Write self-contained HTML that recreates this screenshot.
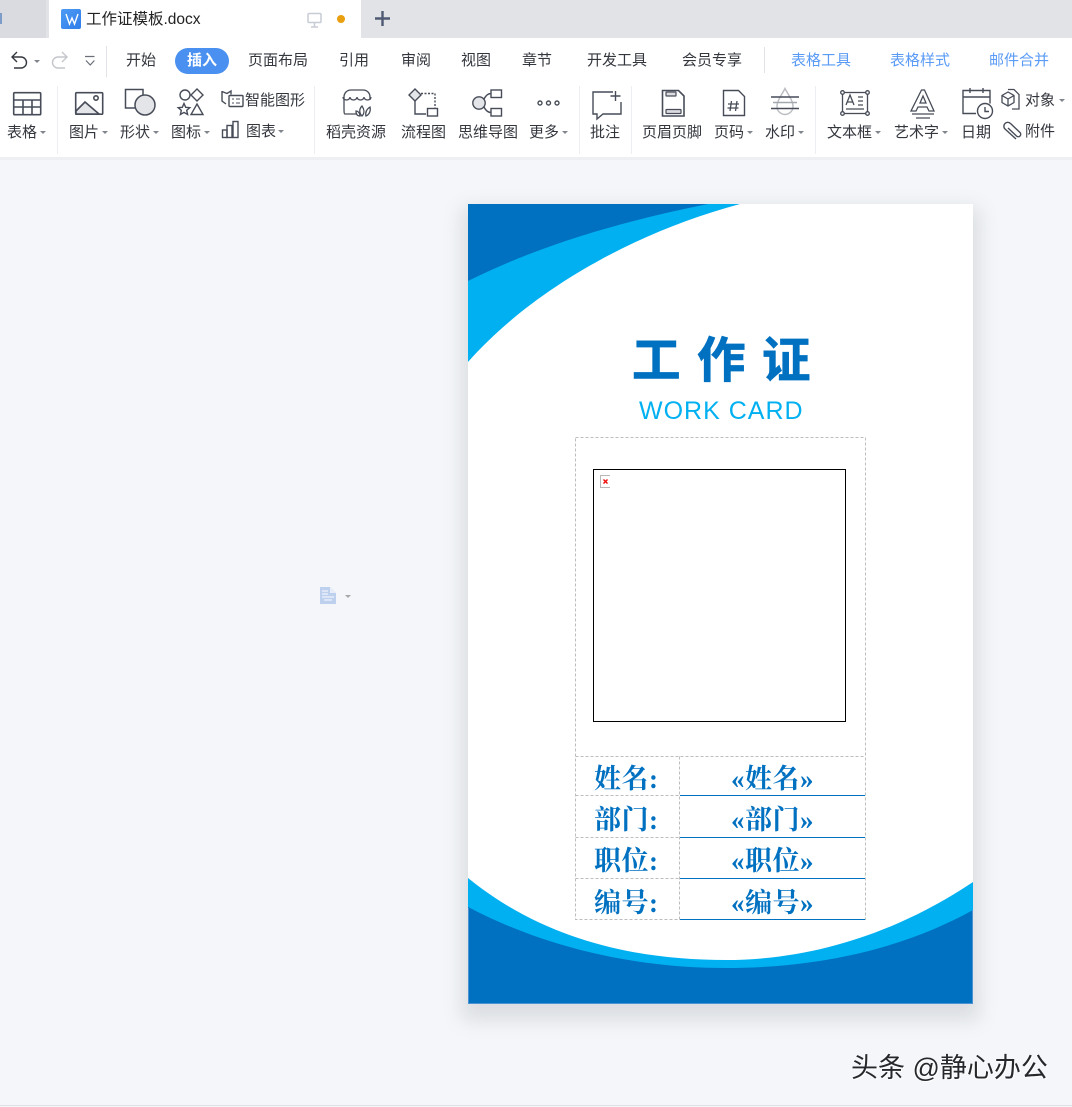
<!DOCTYPE html>
<html lang="zh"><head><meta charset="utf-8"><title>工作证模板</title>
<style>
html,body{margin:0;padding:0}
body{position:relative;width:1072px;height:1107px;overflow:hidden;background:#f4f6f9;font-family:"Liberation Sans","Noto Sans CJK SC",sans-serif;color:#333}
.a{position:absolute}
.t{position:absolute;white-space:nowrap;font-size:15px;line-height:20px;color:#33363d}
.l{color:#5a9bf6}
.c{position:absolute;width:0;height:0;border-left:3.5px solid transparent;border-right:3.5px solid transparent;border-top:3.5px solid #80848c}
svg{position:absolute;left:0;top:0}
.f{position:absolute;font-family:"Liberation Serif","Noto Serif CJK SC",serif;font-weight:700;font-size:27px;line-height:36px;letter-spacing:.5px;color:#0070c0;white-space:nowrap}
</style></head><body>
<div class="a" style="left:0;top:0;width:1072px;height:38px;background:#e2e3e7"></div>
<div class="a" style="left:0;top:0;width:46px;height:38px;background:#d9dbe0"></div>
<div class="a" style="left:0;top:13px;width:2px;height:11px;background:#7d9cc8"></div>
<div class="a" style="left:49px;top:0;width:312px;height:38px;background:#fff"></div>
<div class="a" style="left:0;top:38px;width:1072px;height:119px;background:#fff"></div>
<div class="a" style="left:0;top:157px;width:1072px;height:3px;background:#eeeff2"></div>
<div class="a" style="left:0;top:1105px;width:1072px;height:1px;background:#dfe1e6"></div>
<div class="a" style="left:61px;top:9px;width:20px;height:20px;border-radius:2px;background:linear-gradient(135deg,#4d9bf5,#2f7de8)"></div>
<div class="t" style="left:86px;top:10px;font-size:15.500px;color:#222">工作证模板.docx</div>
<div class="a" style="left:175px;top:48px;width:54px;height:26px;border-radius:13px;background:#4a90f0"></div>
<div class="t" style="left:187px;top:51px;color:#fff;font-weight:700">插入</div>
<div class="t" style="left:126px;top:51px">开始</div>
<div class="t" style="left:248px;top:51px">页面布局</div>
<div class="t" style="left:339px;top:51px">引用</div>
<div class="t" style="left:401px;top:51px">审阅</div>
<div class="t" style="left:461px;top:51px">视图</div>
<div class="t" style="left:522px;top:51px">章节</div>
<div class="t" style="left:587px;top:51px">开发工具</div>
<div class="t" style="left:682px;top:51px">会员专享</div>
<div class="t l" style="left:791px;top:51px">表格工具</div>
<div class="t l" style="left:890px;top:51px">表格样式</div>
<div class="t l" style="left:989px;top:51px">邮件合并</div>
<div class="t" style="left:7px;top:123px">表格</div>
<div class="t" style="left:69px;top:123px">图片</div>
<div class="t" style="left:120px;top:123px">形状</div>
<div class="t" style="left:171px;top:123px">图标</div>
<div class="t" style="left:245px;top:91px">智能图形</div>
<div class="t" style="left:246px;top:122px">图表</div>
<div class="t" style="left:326px;top:123px">稻壳资源</div>
<div class="t" style="left:401px;top:123px">流程图</div>
<div class="t" style="left:458px;top:123px">思维导图</div>
<div class="t" style="left:529px;top:123px">更多</div>
<div class="t" style="left:590px;top:123px">批注</div>
<div class="t" style="left:642px;top:123px">页眉页脚</div>
<div class="t" style="left:714px;top:123px">页码</div>
<div class="t" style="left:765px;top:123px">水印</div>
<div class="t" style="left:827px;top:123px">文本框</div>
<div class="t" style="left:894px;top:123px">艺术字</div>
<div class="t" style="left:961px;top:123px">日期</div>
<div class="t" style="left:1025px;top:91px">对象</div>
<div class="t" style="left:1025px;top:122px">附件</div>
<i class="c" style="left:40px;top:131px"></i><i class="c" style="left:102px;top:131px"></i><i class="c" style="left:153px;top:131px"></i><i class="c" style="left:204px;top:131px"></i><i class="c" style="left:278px;top:130px"></i><i class="c" style="left:562px;top:131px"></i><i class="c" style="left:747px;top:131px"></i><i class="c" style="left:798px;top:131px"></i><i class="c" style="left:875px;top:131px"></i><i class="c" style="left:942px;top:131px"></i><i class="c" style="left:1059px;top:99px"></i><i class="c" style="left:34px;top:60px"></i>
<svg width="1072" height="160" viewBox="0 0 1072 160" fill="none" stroke="#474c58" stroke-width="1.400">
<path d="M66 14l3.500 10 2.500-6 2.500 6 3.500-10" stroke="#fff" stroke-width="1.400"/>
<rect x="308" y="13.500" width="13" height="9" rx="1" stroke="#c8ccd6" stroke-width="1.500"/><path d="M314.500 23v3.500M311 27h7" stroke="#c8ccd6" stroke-width="1.500"/>
<circle cx="341" cy="19" r="4" fill="#e8a010" stroke="none"/>
<path d="M382.500 11v15M375 18.500h15" stroke="#4f5a74" stroke-width="2.400"/>
<path d="M17 52l-5 5 5 5M12 57h9a5.500 5.500 0 0 1 0 11h-7" stroke="#33373f"/>
<path d="M62 52l5 5-5 5M67 57h-9a5.500 5.500 0 0 0 0 11h7" stroke="#c4c6cb"/>
<path d="M85 56.500h9.500M86 60.500l4.200 4.500 4.200-4.500" stroke="#6b6f78" stroke-width="1.200"/>
<path d="M106.500 46v31M764.500 47v26" stroke="#e1e3e8" stroke-width="1"/>
<path d="M57.500 86v68M314.500 86v68M579.500 86v68M631.500 86v68M815.500 86v68" stroke="#eceef1" stroke-width="1"/>
<g stroke-width="1.600"><rect x="13.700" y="92.700" width="27" height="22" rx="1"/><path d="M13.700 100h27M13.700 107h27M23 100v14.500M32 100v14.500"/></g>
<g stroke-width="1.600"><rect x="75.700" y="92.700" width="27" height="21.500" rx="1"/><path d="M76 111l9-9 14 12H76z" fill="#e4e5e8"/><circle cx="96" cy="98" r="2.200"/></g>
<g stroke-width="1.500"><path d="M135 108h-9.500V89.500h17.500V96"/><circle cx="145" cy="105" r="10" fill="#e4e5e8"/></g>
<circle cx="185" cy="95" r="5"/><path d="M197 89l6 6-6 6-6-6z"/><path d="M184 103.500l1.700 3.800 4.100.4-3.100 2.700.9 4.100-3.600-2.100-3.600 2.100.9-4.100-3.100-2.700 4.100-.4z"/><path d="M197 104l6 10.500h-12z"/>
<path d="M222 91.500l5 2 4-2.500v3.500M222 91v10l4 3"/><rect x="229" y="95.500" width="14" height="11" rx="1"/><path d="M232 99h2M236 99h4M232 103h2M236 103h4" stroke-width="1.100"/>
<rect x="222.500" y="130" width="4.500" height="7.500"/><rect x="227" y="125.500" width="5" height="12"/><rect x="233" y="121.500" width="5" height="16"/>
<g stroke-width="1.300"><path d="M344 107V97c0-4 3-7 7-7h12c4 0 7 3 7 7v3M345 114h11M344 107c0 4 0 7 1 7"/><path d="M343 97a3.500 3 0 0 0 7 0a3.500 3 0 0 0 7 0a3.500 3 0 0 0 7 0a3.500 3 0 0 0 7 0"/><path d="M362 116c-3-3-3-7 0-10 2 3 3 7 0 10zM366 116c-1-4 1-7 4-9 1 4-1 8-4 9zM360 116c-3 0-4-2-4-5 2 0 4 2 4 5z"/></g>
<path d="M415 89l6 6-6 6-6-6z" fill="#e4e5e8"/><path d="M415 101v13h11"/><path d="M421 93.500h14v15" stroke-dasharray="2 1.500"/><rect x="427.500" y="108.500" width="10" height="7.500" fill="#fff"/>
<circle cx="479" cy="103" r="6.200" fill="#e4e5e8"/><path d="M484 99c2-4 4-5.500 7-5.500M484 107c2 4 4 5.500 7 5.500"/><rect x="491" y="90" width="10.500" height="7.500"/><rect x="491" y="108.500" width="10.500" height="7.500"/>
<circle cx="540" cy="103" r="2"/><circle cx="548.500" cy="103" r="2"/><circle cx="557" cy="103" r="2"/>
<path d="M613 92h-20v22h4v5l6-5h18v-12" stroke-width="1.400"/><path d="M610.500 96h10M615.500 91v10" stroke-width="1.400"/>
<g stroke-width="1.600"><path d="M662.500 90.500h16l5.500 5.500v20h-21.500z"/><rect x="666" y="92" width="10" height="4" rx=".5" fill="#dcdde0" stroke-width="1.200"/><rect x="666" y="109.500" width="15" height="4" rx=".5" fill="#dcdde0" stroke-width="1.200"/></g>
<path d="M723.500 90.500h15l6 6v19h-21z" stroke-width="1.400"/><path d="M731.500 101l-1.500 10M737 101l-1.500 10M728 104h11M727.500 108h11" stroke-width="1.300"/>
<path d="M785 88.500c-3 6-8 12-8 18a8 8 0 0 0 16 0c0-6-5-12-8-18z" stroke="#babcc2"/><path d="M771 97h28M771 108.500h28" stroke-width="1.500"/><path d="M773 102.500h24" stroke="#a5a8ae"/>
<g stroke-width="1.300"><rect x="842.500" y="92.500" width="25" height="21"/><circle cx="842.500" cy="92.500" r="1.800" fill="#fff"/><circle cx="867.500" cy="92.500" r="1.800" fill="#fff"/><circle cx="842.500" cy="113.500" r="1.800" fill="#fff"/><circle cx="867.500" cy="113.500" r="1.800" fill="#fff"/><path d="M846 105l4-10 4 10M847.500 102h5M858 97h5M858 101h5M858 105h5M846 109h18"/></g>
<g stroke-width="1.300"><path d="M921.500 90h3l9.500 21h-5l-2-4h-9l-2 4h-5z"/><path d="M923 96l3 7h-6z"/><path d="M912 114h22M916 118h14"/></g>
<g stroke-width="1.400"><path d="M976 113.500h-13V90.500h27v13M963 97h27M970 88v5M983 88v5"/><circle cx="985" cy="111" r="7.500" fill="#fff"/><path d="M985 107v4.500h4"/></g>
<g stroke-width="1.300"><path d="M1008 89.500h6l5 5v14.500h-7"/><path d="M1008 92l-6 3.500v7l6 3.500 6-3.500v-7zM1002 95.500l6 3.500 6-3.500M1008 99v7"/></g>
<path d="M1016 139l-11-10a3.800 3.800 0 0 1 5.500-5.500l9.500 9a2.400 2.400 0 0 1-3.500 3.500l-8.500-8" stroke-width="1.400"/>
</svg>
<svg style="left:320px;top:587px" width="40" height="20"><path d="M0 0h10l6 6v11H0z" fill="#bdd0ee"/><path d="M10 0l6 6h-6z" fill="#e8eef8"/><path d="M2 4h6M2 7h6M2 10h12M4 13h8" stroke="#eef3fb" stroke-width="1.200"/><path d="M25 8h6l-3 3z" fill="#a8a8a8"/></svg>
<div class="a" style="left:468px;top:204px;width:505px;height:800px;background:#fff;box-shadow:0 10px 18px 6px rgba(120,125,135,.2)"></div>
<svg style="left:468px;top:204px" width="505" height="800" viewBox="0 0 505 800">
<path d="M0 0H272C160 30 60 90 0 158z" fill="#00b0f0"/>
<path d="M0 0H240C150 18 70 42 0 77z" fill="#0070c0"/>
<path d="M0 674C75 735 165 756 258 756C350 756 435 725 505 678V800H0z" fill="#00b0f0"/>
<path d="M0 703C80 745 170 764 258 764C350 764 435 745 505 706V800H0z" fill="#0070c0"/>
<path d="M.5 704V799.500H504.500V706" fill="none" stroke="#4a92d2"/>
</svg>
<div class="a" style="left:632px;top:326px;font:700 48.500px/70px 'Liberation Sans','Noto Sans CJK SC',sans-serif;letter-spacing:16.500px;color:#0070c0;white-space:nowrap;-webkit-text-stroke:.8px #0070c0">工作证</div>
<div class="a" style="left:639px;top:395px;font:400 25px/32px 'Liberation Sans',sans-serif;letter-spacing:1px;color:#00b0f0;white-space:nowrap">WORK CARD</div>
<svg style="left:570px;top:430px" width="310" height="500" fill="none">
<g stroke="#bdbdbd" stroke-dasharray="3 2"><path d="M5.500 7.500H295.500V489.500H5.500Z"/><path d="M5.500 326.500H295.500M5.500 365.500H110M5.500 407.500H110M5.500 448.500H110M109.500 326.500V489.500"/></g>
<path d="M110 365.500H295M110 407.500H295M110 448.500H295M110 489.500H295" stroke="#0070c0"/>
<rect x="23.500" y="39.500" width="252" height="252" stroke="#000"/>
<path d="M40 57.500H30.500V45.500H40" stroke="#b8b8b8"/><path d="M33.500 49.500l4 4M37.500 49.500l-4 4" stroke="#f01010" stroke-width="1.500"/>
</svg>
<div class="f" style="left:594px;top:761px">姓名:</div>
<div class="f" style="left:594px;top:802px">部门:</div>
<div class="f" style="left:594px;top:843px">职位:</div>
<div class="f" style="left:594px;top:885px">编号:</div>
<div class="f" style="left:731px;top:761px">«姓名»</div>
<div class="f" style="left:731px;top:802px">«部门»</div>
<div class="f" style="left:731px;top:843px">«职位»</div>
<div class="f" style="left:731px;top:885px">«编号»</div>
<div class="a" style="left:851px;top:1050px;font-size:27px;line-height:36px;color:#26282c;white-space:nowrap;text-shadow:1px 1px 0 #fff,-1px 0 0 #fff">头条 @静心办公</div>
</body></html>
